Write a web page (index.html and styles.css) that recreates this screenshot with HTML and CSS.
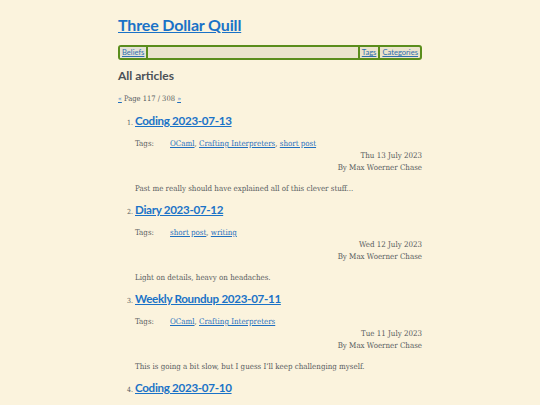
FILE: index.html
```html
<!DOCTYPE html>
<html lang="en">
<head>
<meta charset="utf-8">
<title>Three Dollar Quill</title>
<link rel="stylesheet" href="styles.css">
</head>
<body>
<div class="page">
  <header class="site-header">
    <h1 class="site-title"><a href="#">Three Dollar Quill</a></h1>
    <nav class="site-nav">
      <a class="nav-link nav-left" href="#">Beliefs</a>
      <span class="nav-spacer"></span>
      <a class="nav-link nav-right" href="#">Tags</a>
      <a class="nav-link nav-right" href="#">Categories</a>
    </nav>
  </header>
  <main>
    <h2 class="section-title">All articles</h2>
    <p class="pager"><a class="pager-arrow" href="#">&laquo;</a> Page 117 / 308 <a class="pager-arrow" href="#">&raquo;</a></p>
    <ol class="articles" start="1">
      <li class="article">
        <h3 class="article-title"><a href="#">Coding 2023-07-13</a></h3>
        <div class="tags"><span class="tags-label">Tags:</span><span class="tags-list"><a href="#">OCaml</a>, <a href="#">Crafting Interpreters</a>, <a href="#">short post</a></span></div>
        <div class="meta">Thu 13 July 2023</div>
        <div class="meta">By Max Woerner Chase</div>
        <p class="summary">Past me really should have explained all of this clever stuff...</p>
      </li>
      <li class="article">
        <h3 class="article-title"><a href="#">Diary 2023-07-12</a></h3>
        <div class="tags"><span class="tags-label">Tags:</span><span class="tags-list"><a href="#">short post</a>, <a href="#">writing</a></span></div>
        <div class="meta">Wed 12 July 2023</div>
        <div class="meta">By Max Woerner Chase</div>
        <p class="summary">Light on details, heavy on headaches.</p>
      </li>
      <li class="article">
        <h3 class="article-title"><a href="#">Weekly Roundup 2023-07-11</a></h3>
        <div class="tags"><span class="tags-label">Tags:</span><span class="tags-list"><a href="#">OCaml</a>, <a href="#">Crafting Interpreters</a></span></div>
        <div class="meta">Tue 11 July 2023</div>
        <div class="meta">By Max Woerner Chase</div>
        <p class="summary">This is going a bit slow, but I guess I&rsquo;ll keep challenging myself.</p>
      </li>
      <li class="article">
        <h3 class="article-title"><a href="#">Coding 2023-07-10</a></h3>
        <div class="tags"><span class="tags-label">Tags:</span><span class="tags-list"><a href="#">OCaml</a>, <a href="#">Crafting Interpreters</a></span></div>
        <div class="meta">Mon 10 July 2023</div>
        <div class="meta">By Max Woerner Chase</div>
        <p class="summary">More work.</p>
      </li>
    </ol>
  </main>
</div>
</body>
</html>
```
FILE: styles.css
```css
html, body {
  margin: 0;
  padding: 0;
  background: #fbf3dd;
}
body {
  font-family: "DejaVu Serif", serif;
  font-stretch: condensed;
  font-size: 7.9px;
  color: #575b5e;
  overflow: hidden;
  height: 405px;
}
a {
  color: #1f6fbf;
}
.page {
  width: 304px;
  margin: 0 auto;
  padding-top: 15px;
}
.site-title {
  margin: 0;
  font-family: Lato, "Open Sans", sans-serif;
  font-stretch: normal;
  font-weight: 700;
  font-size: 16px;
  line-height: 20px;
  letter-spacing: -0.15px;
}
.site-title a {
  color: #1a72c7;
}
.site-nav {
  display: flex;
  margin-top: 10px;
  height: 11px;
  border: 2px solid #5a8d1c;
  border-radius: 3px;
  background: #ebe4cd;
  font-family: Lato, "Open Sans", sans-serif;
  font-stretch: normal;
  font-size: 7.6px;
  line-height: 11px;
}
.nav-link {
  color: #2f6fae;
  padding: 0 2px;
}
.nav-left {
  border-right: 2px solid #5a8d1c;
  background: #e4e2d6;
}
.nav-right {
  border-left: 2px solid #5a8d1c;
}
.nav-spacer {
  flex: 1;
}
.section-title {
  margin: 8px 0 0;
  font-family: Lato, "Open Sans", sans-serif;
  font-stretch: normal;
  font-weight: 700;
  font-size: 12px;
  line-height: 16px;
  color: #4b5157;
}
.pager {
  margin: 9px 0 0;
  line-height: 12px;
  font-size: 7.5px;
}
.pager-arrow {
  font-size: 7px;
}
.articles {
  margin: 8px 0 0;
  padding-left: 17px;
}
.article::marker {
  font-family: "DejaVu Serif", serif;
  font-size: 7px;
}
.article-title {
  margin: 0;
  font-family: Lato, "Open Sans", sans-serif;
  font-stretch: normal;
  font-weight: 700;
  font-size: 11.6px;
  line-height: 16px;
  letter-spacing: -0.3px;
}
.article-title a {
  color: #1a72c7;
}
.tags {
  display: flex;
  margin-top: 9px;
  line-height: 12px;
}
.tags-label {
  width: 35px;
}
.meta {
  text-align: right;
  line-height: 12px;
}
.summary {
  margin: 9px 0 7px;
  line-height: 12px;
}
```
